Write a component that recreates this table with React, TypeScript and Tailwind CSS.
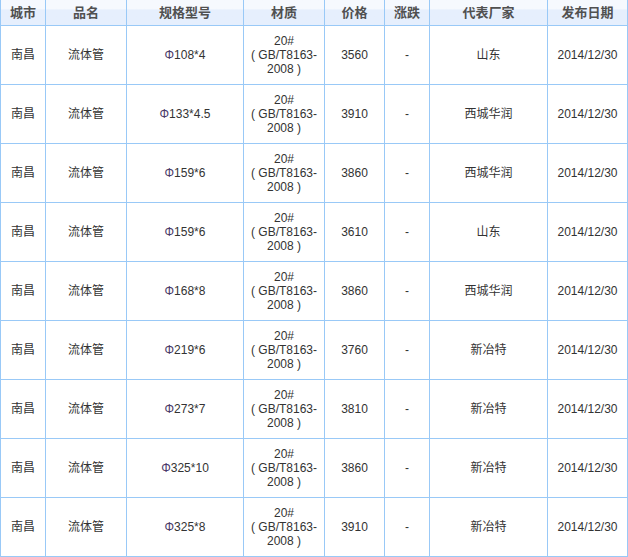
import React from 'react';

interface PriceRow {
  city: string;
  name: string;
  spec: string;
  price: string;
  change: string;
  maker: string;
  date: string;
}

const rows: PriceRow[] = [
  { city: '南昌', name: '流体管', spec: '108*4', price: '3560', change: '-', maker: '山东', date: '2014/12/30' },
  { city: '南昌', name: '流体管', spec: '133*4.5', price: '3910', change: '-', maker: '西城华润', date: '2014/12/30' },
  { city: '南昌', name: '流体管', spec: '159*6', price: '3860', change: '-', maker: '西城华润', date: '2014/12/30' },
  { city: '南昌', name: '流体管', spec: '159*6', price: '3610', change: '-', maker: '山东', date: '2014/12/30' },
  { city: '南昌', name: '流体管', spec: '168*8', price: '3860', change: '-', maker: '西城华润', date: '2014/12/30' },
  { city: '南昌', name: '流体管', spec: '219*6', price: '3760', change: '-', maker: '新冶特', date: '2014/12/30' },
  { city: '南昌', name: '流体管', spec: '273*7', price: '3810', change: '-', maker: '新冶特', date: '2014/12/30' },
  { city: '南昌', name: '流体管', spec: '325*10', price: '3860', change: '-', maker: '新冶特', date: '2014/12/30' },
  { city: '南昌', name: '流体管', spec: '325*8', price: '3910', change: '-', maker: '新冶特', date: '2014/12/30' },
];

const headers = ['城市', '品名', '规格型号', '材质', '价格', '涨跌', '代表厂家', '发布日期'];
const widths = ['w-[45px]', 'w-[81px]', 'w-[117px]', 'w-[81px]', 'w-[60px]', 'w-[45px]', 'w-[118px]', 'w-[80px]'];

const font = { fontFamily: '"Liberation Sans", "Noto Sans CJK SC", sans-serif' };

export default function App() {
  return (
    <div className="w-[628px] h-[557px] bg-white overflow-hidden" style={font}>
      <table className="table-fixed border-collapse w-[627px] text-[12px] text-[#333]">
        <colgroup>
          {widths.map((w, i) => (
            <col key={i} className={w} />
          ))}
        </colgroup>
        <thead>
          <tr className="h-[25px] bg-gradient-to-b from-[#f6f9fe] from-35% to-[#e6effd] to-40%">
            {headers.map((h) => (
              <th
                key={h}
                className="border-x border-b border-[#99c9f7] p-0 text-center text-[13px] font-bold text-[#505050] leading-none"
              >
                {h}
              </th>
            ))}
          </tr>
        </thead>
        <tbody>
          {rows.map((r, i) => (
            <tr key={i} className="h-[59px]">
              <td className="border border-[#99c9f7] p-0 text-center">{r.city}</td>
              <td className="border border-[#99c9f7] p-0 text-center">{r.name}</td>
              <td className="border border-[#99c9f7] p-0 text-center">
                <span className="text-[#4a3a6a]">Φ</span>
                {r.spec}
              </td>
              <td className="border border-[#99c9f7] p-0 text-center leading-[14px] whitespace-pre">
                <div>20#</div>
                <div>( GB/T8163-</div>
                <div>2008 )</div>
              </td>
              <td className="border border-[#99c9f7] p-0 text-center">{r.price}</td>
              <td className="border border-[#99c9f7] p-0 text-center">{r.change}</td>
              <td className="border border-[#99c9f7] p-0 text-center">{r.maker}</td>
              <td className="border border-[#99c9f7] p-0 text-center">{r.date}</td>
            </tr>
          ))}
        </tbody>
      </table>
    </div>
  );
}
